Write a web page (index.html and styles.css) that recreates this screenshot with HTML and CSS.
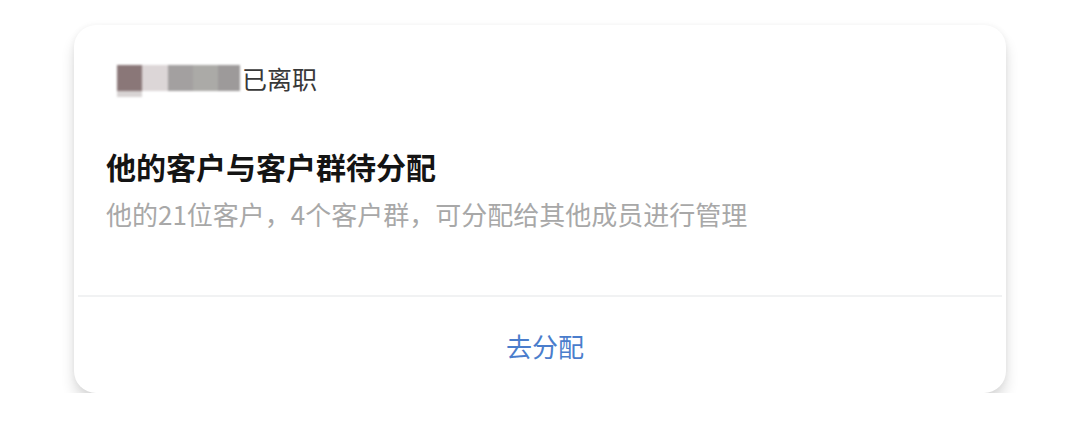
FILE: index.html
```html
<!DOCTYPE html>
<html lang="zh-CN">
<head>
<meta charset="utf-8">
<link rel="stylesheet" href="styles.css">
</head>
<body>
<div class="page">
  <div class="card">
    <div class="card-body">
      <div class="status-row">
        <div class="name-blur" aria-hidden="true">
          <span class="px px1"></span>
          <span class="px px2"></span>
          <span class="px px3"></span>
          <span class="px px4"></span>
          <span class="px px5"></span>
        </div>
        <span class="status">已离职</span>
      </div>
      <div class="title">他的客户与客户群待分配</div>
      <div class="desc">他的21位客户，4个客户群，可分配给其他成员进行管理</div>
    </div>
    <div class="divider"></div>
    <div class="action">去分配</div>
  </div>
</div>
</body>
</html>
```

FILE: styles.css
```css
html, body {
  margin: 0;
  padding: 0;
  background: #ffffff;
}

body {
  font-family: "Noto Sans CJK SC", "Noto Sans", sans-serif;
}

.page {
  padding: 25px 74px 0 74px;
}

.card {
  background: #ffffff;
  border-radius: 22px;
  height: 368px;
  display: flex;
  flex-direction: column;
  box-shadow: 0 10px 14px rgba(0, 0, 0, 0.14), 0 0 6px rgba(0, 0, 0, 0.05);
}

.card-body {
  padding: 38px 32px 0 32px;
  height: 207px;
  box-sizing: border-box;
}

.status-row {
  display: flex;
  align-items: center;
  height: 30px;
}

.name-blur {
  display: flex;
  margin-left: 11px;
  height: 26px;
  filter: blur(0.8px);
}

.px {
  display: block;
  height: 26px;
}

.px1 { width: 25px; background: #8a7778; box-shadow: 0 6px 0 #d8d4d4; }
.px2 { width: 26px; background: #dcd6d7; }
.px3 { width: 25px; background: #a3a0a0; }
.px4 { width: 25px; background: #abaaa7; }
.px5 { width: 22px; background: #9d9a9a; }

.status {
  font-size: 25px;
  line-height: 30px;
  color: #383838;
  margin-left: 2px;
}

.title {
  margin-top: 55px;
  font-size: 30px;
  line-height: 36px;
  font-weight: 700;
  color: #141414;
}

.desc {
  margin-top: 15px;
  font-size: 26px;
  line-height: 30px;
  color: #a8a8a8;
}

.divider {
  margin: 63px 4px 0 4px;
  height: 2px;
  background: #f1f2f3;
}

.action {
  flex: 1;
  display: flex;
  align-items: center;
  justify-content: center;
  padding-left: 10px;
  font-size: 26px;
  color: #4a7dcc;
}
```
